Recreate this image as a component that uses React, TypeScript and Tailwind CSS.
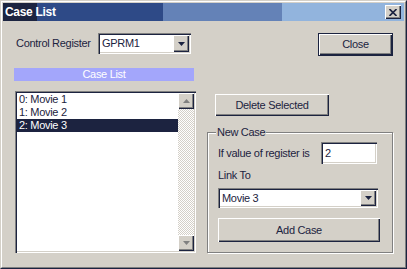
const FONT = "font-['Liberation_Sans',Arial,sans-serif]";
const RAISED =
  "bg-[#d4d0c8] shadow-[inset_1px_1px_#ffffff,inset_-1px_-1px_#1c2340,inset_-2px_-2px_#808080]";
const SUNKEN =
  "bg-white shadow-[inset_1px_1px_#808080,inset_2px_2px_#1c2340,inset_-1px_-1px_#ffffff,inset_-2px_-2px_#d4d0c8]";

function Arrow({ dir, color }: { dir: "up" | "down"; color: string }) {
  return (
    <svg width="7" height="4" viewBox="0 0 7 4">
      {dir === "down" ? (
        <polygon points="0,0 7,0 3.5,4" fill={color} />
      ) : (
        <polygon points="0,4 7,4 3.5,0" fill={color} />
      )}
    </svg>
  );
}

function Combo({ value, className }: { value: string; className: string }) {
  return (
    <div className={`${SUNKEN} flex items-stretch p-[2px] ${className}`}>
      <div className="flex-1 pl-[2px] flex items-center text-[11px] text-[#1c2340]">{value}</div>
      <div className={`${RAISED} w-[16px] flex items-center justify-center`}>
        <Arrow dir="down" color="#1c2340" />
      </div>
    </div>
  );
}

export default function App() {
  const items = ["0: Movie 1", "1: Movie 2", "2: Movie 3"];
  const selected = 2;

  return (
    <div
      className={`${FONT} w-[407px] h-[269px] bg-[#d4d0c8] border border-t-[#d4d0c8] border-l-[#d4d0c8] border-r-[#1c2340] border-b-[#1c2340] text-[#1c2340]`}
    >
      <div className="h-full border border-t-white border-l-white border-r-[#808080] border-b-[#808080] p-[1px] flex flex-col">
        {/* title bar */}
        <div className="h-[18px] flex items-center justify-between pl-[2px] pr-[3px] bg-[linear-gradient(to_right,#1c2440_0_34px,#2e4a87_34px_160px,#6482b7_160px_279px,#92b4dd_279px)]">
          <span className="text-white font-bold text-[12px] tracking-[-0.3px] leading-none">Case List</span>
          <div className={`${RAISED} w-[16px] h-[14px] flex items-center justify-center`}>
            <svg width="8" height="7" viewBox="0 0 8 7">
              <path d="M0.5 0 L7.5 7 M7.5 0 L0.5 7" stroke="#1c2340" strokeWidth="1.6" />
            </svg>
          </div>
        </div>

        <div className="flex text-[11px] tracking-[-0.3px]">
          {/* left column */}
          <div className="pl-[11px] w-[193px] flex flex-col">
            <div className="mt-[12px] h-[21px] flex items-center">
              <span className="ml-[2px] w-[82px]">Control Register</span>
              <Combo value="GPRM1" className="w-[93px] h-[21px]" />
            </div>
            <div className="mt-[14px] h-[13px] w-[180px] bg-[#a3a6fb] text-white text-center leading-[13px]">
              Case List
            </div>
            <div className={`${SUNKEN} mt-[10px] ml-[1px] w-[181px] h-[162px] p-[2px] flex`}>
              <div className="flex-1">
                {items.map((t, i) => (
                  <div
                    key={t}
                    className={`h-[13px] leading-[13px] pl-[2px] text-[11px] ${
                      i === selected ? "bg-[#1c2340] text-white" : "text-[#1c2340]"
                    }`}
                  >
                    {t}
                  </div>
                ))}
              </div>
              <div className="w-[16px] flex flex-col bg-[repeating-conic-gradient(#d4d0c8_0_25%,#ffffff_0_50%)] bg-[length:2px_2px]">
                <div className={`${RAISED} h-[16px] flex items-center justify-center`}>
                  <Arrow dir="up" color="#808080" />
                </div>
                <div className="flex-1" />
                <div className={`${RAISED} h-[16px] flex items-center justify-center`}>
                  <Arrow dir="down" color="#808080" />
                </div>
              </div>
            </div>
          </div>

          {/* right column */}
          <div className="ml-[11px] w-[186px] flex flex-col">
            <button
              className={`mt-[12px] self-end w-[75px] h-[23px] border border-[#1c2340] ${RAISED} text-[11px]`}
            >
              Close
            </button>
            <button className={`mt-[38px] ml-[8px] w-[114px] h-[22px] ${RAISED} text-[11px]`}>
              Delete Selected
            </button>
            <fieldset className="mt-[10px] h-[127px] border border-[#808080] shadow-[inset_1px_1px_#ffffff,1px_1px_#ffffff] pl-[10px]">
              <legend className="-ml-[2px] px-[1px] h-[13px] leading-[13px] bg-[#d4d0c8]">New Case</legend>
              <div className="mt-[3px] h-[22px] flex items-center">
                <span className="w-[103px]">If value of register is</span>
                <div className={`${SUNKEN} w-[56px] h-[22px] pl-[4px] flex items-center`}>2</div>
              </div>
              <div className="mt-[5px] h-[13px] leading-[13px]">Link To</div>
              <Combo value="Movie 3" className="mt-[6px] w-[160px] h-[20px]" />
              <button className={`mt-[10px] w-[162px] h-[24px] ${RAISED} text-[11px]`}>Add Case</button>
            </fieldset>
          </div>
        </div>
      </div>
    </div>
  );
}
